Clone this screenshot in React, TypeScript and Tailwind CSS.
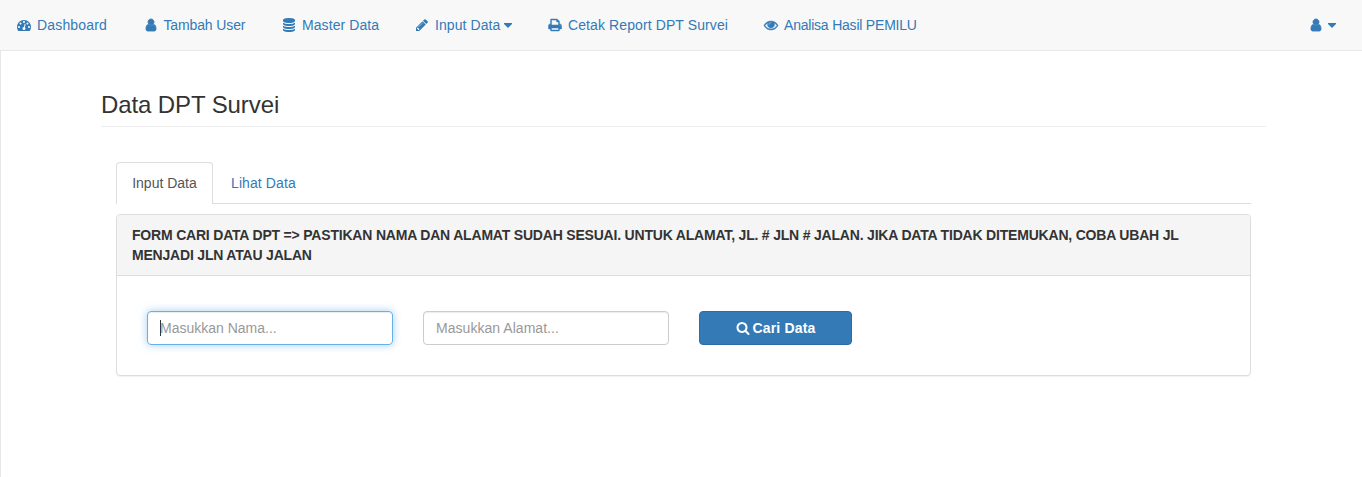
import React from "react";

const ICONS = {
  dashboard:
    "M384 1152q0-53-37.5-90.5t-90.5-37.5-90.5 37.5-37.5 90.5 37.5 90.5 90.5 37.5 90.5-37.5 37.5-90.5zm192-448q0-53-37.5-90.5t-90.5-37.5-90.5 37.5-37.5 90.5 37.5 90.5 90.5 37.5 90.5-37.5 37.5-90.5zm428 481l101-382q6-26-7.5-48.5t-38.5-29.5-48 6.5-30 39.5l-101 382q-60 5-107 43.5t-63 98.5q-20 77 20 146t117 89 146-20 89-117q16-60-6-117t-72-91zm660-33q0-53-37.5-90.5t-90.5-37.5-90.5 37.5-37.5 90.5 37.5 90.5 90.5 37.5 90.5-37.5 37.5-90.5zm-640-640q0-53-37.5-90.5t-90.5-37.5-90.5 37.5-37.5 90.5 37.5 90.5 90.5 37.5 90.5-37.5 37.5-90.5zm448 192q0-53-37.5-90.5t-90.5-37.5-90.5 37.5-37.5 90.5 37.5 90.5 90.5 37.5 90.5-37.5 37.5-90.5zm320 448q0 261-141 483-19 29-54 29h-1402q-35 0-54-29-141-221-141-483 0-182 71-348t191-286 286-191 348-71 348 71 286 191 191 286 71 348z",
  user: "M1536 1399q0 109-62.5 187t-150.5 78h-854q-88 0-150.5-78t-62.5-187q0-85 8.5-160.5t31.5-152 58.5-131 94-89 134.5-34.5q131 128 313 128t313-128q76 0 134.5 34.5t94 89 58.5 131 31.5 152 8.5 160.5zm-256-887q0 159-112.5 271.5t-271.5 112.5-271.5-112.5-112.5-271.5 112.5-271.5 271.5-112.5 271.5 112.5 112.5 271.5z",
  database:
    "M896 768q237 0 443-43t325-127v170q0 69-103 128t-280 93.5-385 34.5-385-34.5-280-93.5-103-128v-170q119 84 325 127t443 43zm0 768q237 0 443-43t325-127v170q0 69-103 128t-280 93.5-385 34.5-385-34.5-280-93.5-103-128v-170q119 84 325 127t443 43zm0-384q237 0 443-43t325-127v170q0 69-103 128t-280 93.5-385 34.5-385-34.5-280-93.5-103-128v-170q119 84 325 127t443 43zm0-1152q208 0 385 34.5t280 93.5 103 128v128q0 69-103 128t-280 93.5-385 34.5-385-34.5-280-93.5-103-128v-128q0-69 103-128t280-93.5 385-34.5z",
  pencil:
    "M491 1536l91-91-235-235-91 91v107h128v128h107zm523-928q0-22-22-22-10 0-17 7l-542 542q-7 7-7 17 0 22 22 22 10 0 17-7l542-542q7-7 7-17zm-54-192l416 416-832 832h-416v-416zm683 96q0 53-37 90l-166 166-416-416 166-165q36-38 90-38 53 0 91 38l235 234q37 39 37 91z",
  print:
    "M448 1536h896v-256h-896v256zm0-640h896v-384h-160q-40 0-68-28t-28-68v-160h-640v640zm1152 64q0-26-19-45t-45-19-45 19-19 45 19 45 45 19 45-19 19-45zm128 0v416q0 13-9.5 22.5t-22.5 9.5h-224v160q0 40-28 68t-68 28h-960q-40 0-68-28t-28-68v-160h-224q-13 0-22.5-9.5t-9.5-22.5v-416q0-79 56.5-135.5t135.5-56.5h64v-544q0-40 28-68t68-28h672q40 0 88 20t76 48l152 152q28 28 48 76t20 88v256h64q79 0 135.5 56.5t56.5 135.5z",
  eye: "M1664 960q-152-236-381-353 61 104 61 225 0 185-131.5 316.5t-316.5 131.5-316.5-131.5-131.5-316.5q0-121 61-225-229 117-381 353 133 205 333.5 326.5t434.5 121.5 434.5-121.5 333.5-326.5zm-720-384q0-20-14-34t-34-14q-125 0-214.5 89.5t-89.5 214.5q0 20 14 34t34 14 34-14 14-34q0-86 61-147t147-61q20 0 34-14t14-34zm848 384q0 34-20 69-140 230-376.5 368.5t-499.5 138.5-499.5-139-376.5-368q-20-35-20-69t20-69q140-229 376.5-368t499.5-139 499.5 139 376.5 368q20 35 20 69z",
  search:
    "M1216 832q0-185-131.5-316.5t-316.5-131.5-316.5 131.5-131.5 316.5 131.5 316.5 316.5 131.5 316.5-131.5 131.5-316.5zm512 832q0 52-38 90t-90 38q-54 0-90-38l-343-342q-179 124-399 124-143 0-273.5-55.5t-225-150-150-225-55.5-273.5 55.5-273.5 150-225 225-150 273.5-55.5 273.5 55.5 225 150 150 225 55.5 273.5q0 220-124 399l343 343q37 37 37 90z",
};

function Icon({ name, className = "" }: { name: keyof typeof ICONS; className?: string }) {
  const weight = name === "user" ? 110 : name === "eye" || name === "print" ? 60 : 0;
  return (
    <svg
      viewBox="0 0 1792 1792"
      className={`size-3.5 shrink-0 overflow-visible fill-current ${className}`}
      stroke="currentColor"
      strokeWidth={weight}
      aria-hidden="true"
    >
      <path d={ICONS[name]} />
    </svg>
  );
}

function Caret({ className = "" }: { className?: string }) {
  return (
    <svg viewBox="0 0 8 5" className={`mt-px h-[5px] w-2 shrink-0 fill-current ${className}`} aria-hidden="true">
      <path d="M0 0h8v1L4 5 0 1z" />
    </svg>
  );
}

const NAV: { icon: keyof typeof ICONS; label: string; size: string; caret?: boolean }[] = [
  { icon: "dashboard", label: "Dashboard", size: "w-[126.5px] tracking-[0.17px]" },
  { icon: "user", label: "Tambah User", size: "w-[138.5px] tracking-[-0.13px]" },
  { icon: "database", label: "Master Data", size: "w-[133px] tracking-[0.08px]" },
  { icon: "pencil", label: "Input Data", size: "w-[133px] tracking-[0.07px]", caret: true },
  { icon: "print", label: "Cetak Report DPT Survei", size: "w-[216px] tracking-[0.1px]" },
  { icon: "eye", label: "Analisa Hasil PEMILU", size: "w-[190px] tracking-[-0.21px]" },
];

export default function App() {
  return (
    <div className="flex h-[477px] w-[1362px] flex-col overflow-hidden bg-white font-['Liberation_Sans',Arial,sans-serif] text-sm leading-5 text-[#333]">
      <nav className="flex h-[51px] shrink-0 items-start border-b border-[#e7e7e7] bg-[#f8f8f8] text-[#337ab7]">
        {NAV.map((item) => (
          <a key={item.label} href="#" className={`flex h-[50px] shrink-0 items-center whitespace-nowrap pl-[17px] ${item.size}`}>
            <Icon name={item.icon} className="mr-1.5" />
            {item.label}
            {item.caret && <Caret className="ml-1" />}
          </a>
        ))}
        <a href="#" className="ml-auto mr-[26px] flex h-[50px] items-center">
          <Icon name="user" className="mr-[5.5px]" />
          <Caret />
        </a>
      </nav>

      <main className="flex-1 border-l border-[#e7e7e7] pl-[100px] pr-24">
        <h3 className="h-[76px] border-b border-[#eee] pt-[41px] text-2xl leading-[26px] tracking-[-0.1px]">Data DPT Survei</h3>

        <div className="px-[15px] pt-[35px]">
          <ul className="flex h-[42px] border-b border-[#ddd]">
            <li className="-mb-px flex h-[42px] w-[97px] justify-center rounded-t border border-b-0 border-[#ddd] bg-white pt-2.5 text-[#555]">
              Input Data
            </li>
            <li className="ml-[3px] flex h-[42px] items-center px-[15px] tracking-[0.1px] text-[#337ab7]">Lihat Data</li>
          </ul>

          <section className="mt-2.5 h-[162px] rounded border border-[#ddd] bg-white shadow-[0_1px_1px_rgba(0,0,0,0.05)]">
            <div className="h-[61px] rounded-t-[3px] border-b border-[#ddd] bg-[#f5f5f5] px-[15px] pt-2.5 font-bold tracking-[-0.195px] whitespace-nowrap">
              FORM CARI DATA DPT =&gt; PASTIKAN NAMA DAN ALAMAT SUDAH SESUAI. UNTUK ALAMAT, JL. # JLN # JALAN. JIKA DATA TIDAK DITEMUKAN, COBA UBAH JL
              <br />
              MENJADI JLN ATAU JALAN
            </div>
            <form className="flex gap-[30px] px-[30px] pt-[35px]">
              <div className="flex h-[34px] w-[246px] items-center rounded border border-[#66afe9] px-3 text-[#999] shadow-[inset_0_1px_1px_rgba(0,0,0,0.075),0_0_8px_rgba(102,175,233,0.6)]">
                <span className="-mr-px h-4 w-px bg-[#333]" />
                Masukkan Nama...
              </div>
              <div className="flex h-[34px] w-[246px] items-center rounded border border-[#ccc] px-3 text-[#999] tracking-[0.04px] shadow-[inset_0_1px_1px_rgba(0,0,0,0.075)]">
                Masukkan Alamat...
              </div>
              <button type="button" className="flex h-[34px] w-[153px] items-center justify-center rounded border border-[#2e6da4] bg-[#337ab7] font-bold tracking-[0.15px] text-white">
                <Icon name="search" className="mr-[3px]" />
                Cari Data
              </button>
            </form>
          </section>
        </div>
      </main>
    </div>
  );
}
